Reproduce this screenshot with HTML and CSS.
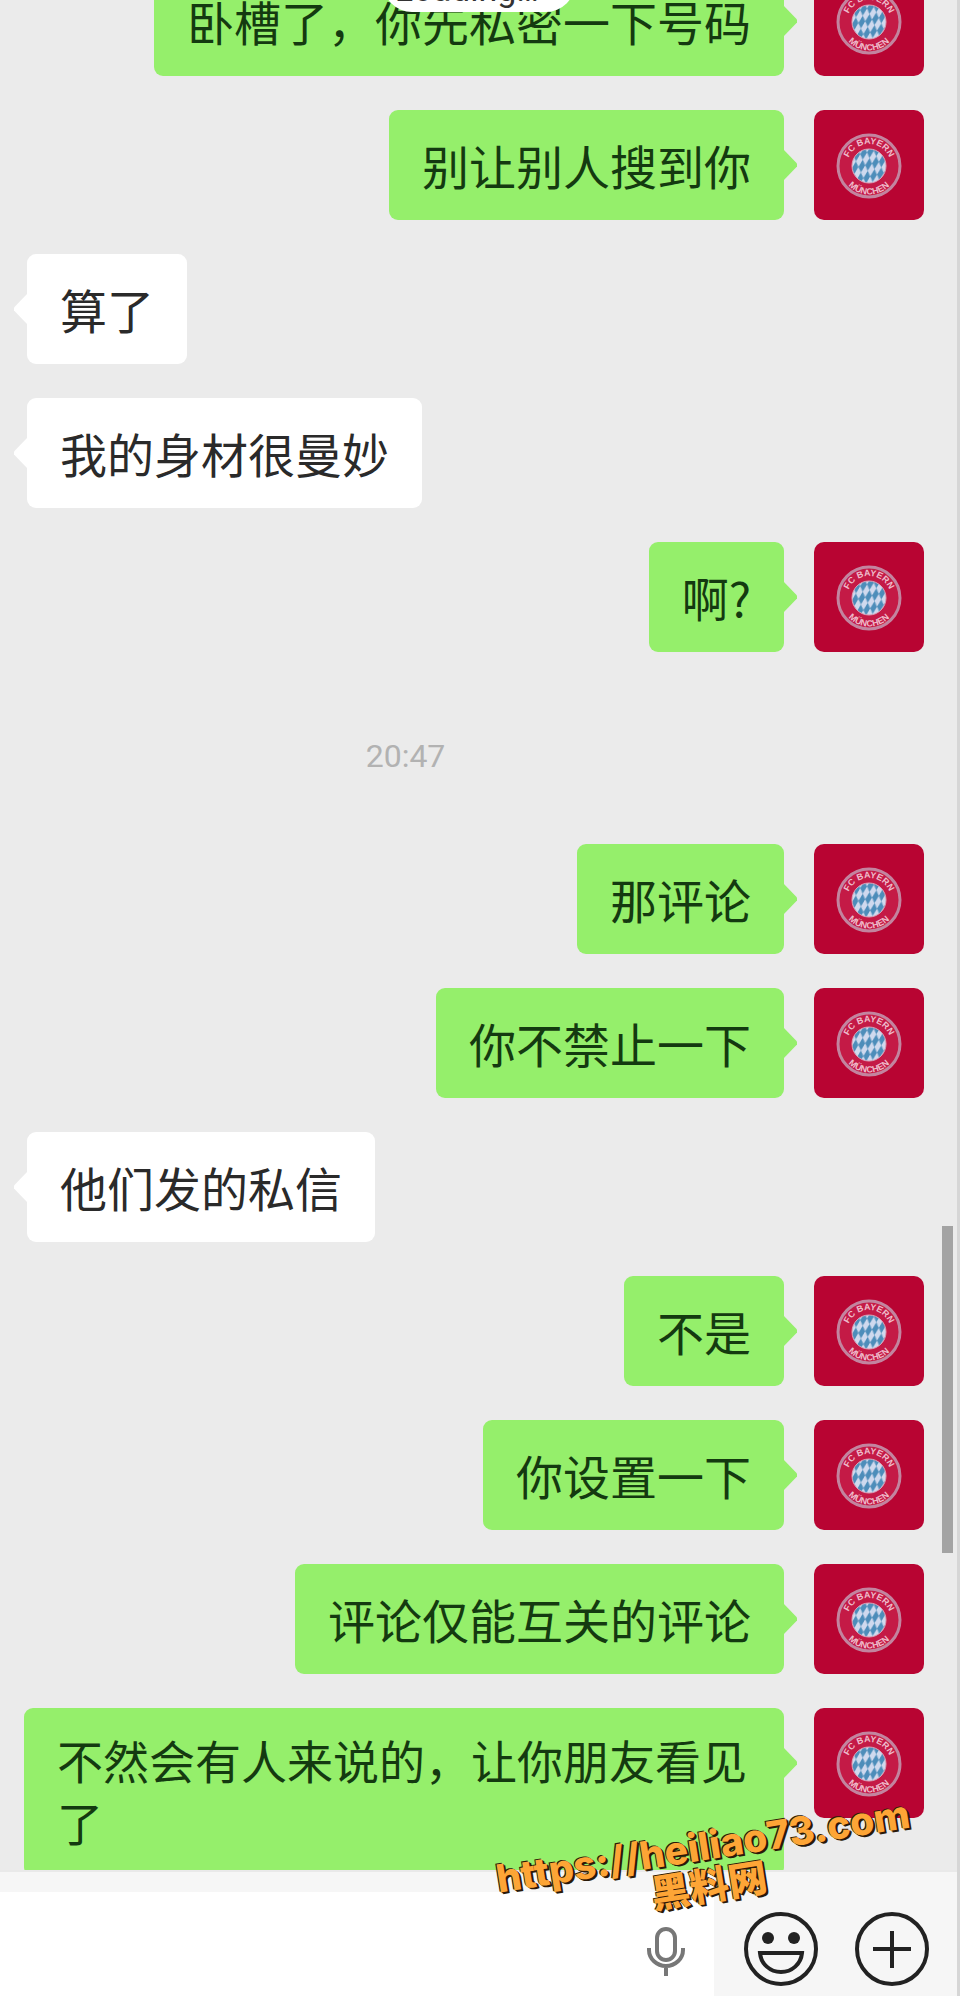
FILE: index.html
```
<!DOCTYPE html>
<html lang="zh-CN">
<head>
<meta charset="utf-8">
<meta name="viewport" content="width=device-width, initial-scale=1">
<title>聊天</title>
<link rel="stylesheet" href="styles.css">
</head>
<body>
<svg class="defs" aria-hidden="true">
  <defs>
    <pattern id="lozenge" width="7" height="12" patternUnits="userSpaceOnUse" patternTransform="rotate(-14) skewX(-22)">
      <rect width="7" height="12" fill="#cfd9ee"/>
      <path d="M3.500 0L7 6L3.500 12L0 6Z" fill="#4d8dba"/>
    </pattern>
    <path id="arc-top" d="M33 56a22 22 0 0 1 44 0"/>
    <path id="arc-bottom" d="M26.500 56a28.500 28.500 0 0 0 57 0"/>
    <symbol id="crest" viewBox="0 0 110 110">
      <rect width="110" height="110" fill="#b80432"/>
      <circle cx="55" cy="56" r="31" fill="#c41a46" stroke="#c3849f" stroke-width="3"/>
      <circle cx="55" cy="56" r="17" fill="url(#lozenge)" stroke="#d9a3b9" stroke-width="1"/>
      <text class="crest-text"><textPath href="#arc-top" startOffset="50%">FC BAYERN</textPath></text>
      <text class="crest-text"><textPath href="#arc-bottom" startOffset="50%">MÜNCHEN</textPath></text>
    </symbol>
  </defs>
</svg>

<main class="chat">
  <div class="toast">Loading…</div>
  <ol class="messages">
    <li class="row row-out"><p class="bubble">卧槽了，你先私密一下号码</p><svg class="avatar" role="img" aria-label="头像"><use href="#crest"/></svg></li>
    <li class="row row-out"><p class="bubble">别让别人搜到你</p><svg class="avatar" role="img" aria-label="头像"><use href="#crest"/></svg></li>
    <li class="row row-in"><p class="bubble">算了</p></li>
    <li class="row row-in"><p class="bubble">我的身材很曼妙</p></li>
    <li class="row row-out"><p class="bubble">啊?</p><svg class="avatar" role="img" aria-label="头像"><use href="#crest"/></svg></li>
    <li class="time"><time>20:47</time></li>
    <li class="row row-out"><p class="bubble">那评论</p><svg class="avatar" role="img" aria-label="头像"><use href="#crest"/></svg></li>
    <li class="row row-out"><p class="bubble">你不禁止一下</p><svg class="avatar" role="img" aria-label="头像"><use href="#crest"/></svg></li>
    <li class="row row-in"><p class="bubble">他们发的私信</p></li>
    <li class="row row-out"><p class="bubble">不是</p><svg class="avatar" role="img" aria-label="头像"><use href="#crest"/></svg></li>
    <li class="row row-out"><p class="bubble">你设置一下</p><svg class="avatar" role="img" aria-label="头像"><use href="#crest"/></svg></li>
    <li class="row row-out"><p class="bubble">评论仅能互关的评论</p><svg class="avatar" role="img" aria-label="头像"><use href="#crest"/></svg></li>
    <li class="row row-out"><p class="bubble bubble-long">不然会有人来说的，让你朋友看见了</p><svg class="avatar" role="img" aria-label="头像"><use href="#crest"/></svg></li>
  </ol>
  <div class="scrollbar"></div>
</main>

<form class="composer">
  <div class="field">
    <input class="field-input" type="text" aria-label="消息">
    <button class="icon-button" type="button" aria-label="语音输入">
      <svg class="icon-mic" viewBox="0 0 40 50" fill="none" stroke="#777" stroke-width="4">
        <rect x="11" y="3" width="18" height="31" rx="9"/>
        <path d="M3 22v2a17 16 0 0 0 34 0v-2M20 40v10"/>
      </svg>
    </button>
  </div>
  <div class="actions">
    <button class="icon-button" type="button" aria-label="表情">
      <svg class="icon-round" viewBox="0 0 74 74" fill="none" stroke="#222" stroke-width="4">
        <circle cx="37" cy="37" r="35"/>
        <circle cx="24" cy="26" r="6" fill="#222" stroke="none"/>
        <circle cx="50" cy="26" r="6" fill="#222" stroke="none"/>
        <path d="M16 41h42c-1 11-10 19-21 19s-20-8-21-19z"/>
      </svg>
    </button>
    <button class="icon-button" type="button" aria-label="更多">
      <svg class="icon-round" viewBox="0 0 74 74" fill="none" stroke="#222" stroke-width="4">
        <circle cx="37" cy="37" r="35"/>
        <path d="M37 19v37M18 37h38"/>
      </svg>
    </button>
  </div>
</form>

<div class="watermark">
  <span>https://heiliao73.com</span>
  <span>黑料网</span>
</div>
</body>
</html>
```
FILE: styles.css
```
* {
  box-sizing: border-box;
}

body {
  position: relative;
  display: flex;
  flex-direction: column;
  height: 100vh;
  margin: 0;
  overflow: hidden;
  border-right: 3px solid #d6d6d6;
  background: #ebebeb;
  color: #2a2a2a;
  font-family: "Noto Sans CJK SC", sans-serif;
}

.defs {
  position: absolute;
  width: 0;
  height: 0;
}

.chat {
  position: relative;
  flex: 1;
  min-height: 0;
  overflow: hidden;
}

.messages {
  display: flex;
  flex-direction: column;
  gap: 34px;
  margin: -34px 0 0;
  padding: 0 33px 0 27px;
  list-style: none;
}

.row {
  display: flex;
  align-items: flex-start;
}

.row-out {
  justify-content: flex-end;
  gap: 30px;
  margin-left: -27px;
}

.bubble {
  position: relative;
  margin: 0;
  padding: 24px 33px;
  border-radius: 9px;
  background: #fff;
  font-size: 47px;
  line-height: 62px;
}

.row-out .bubble {
  background: #95ef6b;
  color: #143a10;
}

.row-out .bubble-long {
  max-width: 760px;
  padding-top: 20px;
  font-size: 46px;
}

.bubble::after {
  content: "";
  position: absolute;
  top: 39px;
  left: -13px;
  width: 14px;
  height: 32px;
  background: inherit;
  clip-path: polygon(100% 0, 0 45%, 0 55%, 100% 100%);
}

.row-out .bubble::after {
  right: -13px;
  left: auto;
  clip-path: polygon(0 0, 100% 45%, 100% 55%, 0 100%);
}

.avatar {
  flex: none;
  width: 110px;
  height: 110px;
  border-radius: 10px;
}

.crest-text {
  fill: #efbccb;
  font: 700 9px "Liberation Sans", sans-serif;
  text-anchor: middle;
}

.time {
  padding: 46px 140px 30px 0;
  color: #b2b2b2;
  font-family: Roboto, sans-serif;
  font-size: 32px;
  line-height: 48px;
  text-align: center;
}

.toast {
  position: absolute;
  z-index: 1;
  top: -46px;
  left: 383px;
  width: 192px;
  padding: 12px 24px 0 0;
  border-radius: 29px;
  background: #fff;
  color: #333;
  font-family: Roboto, sans-serif;
  font-size: 34px;
  line-height: 46px;
  text-align: center;
}

.scrollbar {
  position: absolute;
  top: 1226px;
  right: 4px;
  width: 11px;
  height: 327px;
  background: #a3a3a3;
}

.composer {
  display: flex;
  border-top: 2px solid #e9e9e9;
  background: #f6f6f6;
}

.field {
  display: flex;
  flex: 1;
  align-items: center;
  margin-top: 20px;
  padding-right: 28px;
  background: #fff;
}

.field-input {
  flex: 1;
  min-width: 0;
  height: 104px;
  padding: 0 27px;
  border: 0;
  outline: 0;
  background: transparent;
  font: inherit;
  font-size: 46px;
}

.icon-button {
  display: flex;
  padding: 0;
  border: 0;
  background: none;
}

.icon-mic {
  width: 40px;
  height: 50px;
  margin-top: 14px;
}

.icon-round {
  width: 74px;
  height: 74px;
}

.actions {
  display: flex;
  gap: 37px;
  padding: 40px 28px 0 30px;
}

.watermark {
  position: absolute;
  right: 42px;
  bottom: 90px;
  display: flex;
  flex-direction: column;
  align-items: center;
  color: #fda536;
  font-family: Inter, "Noto Sans CJK SC", sans-serif;
  font-size: 39px;
  font-weight: 800;
  line-height: 40px;
  text-shadow: 1px 1px 0 #2b1a08, 2px 2px 0 #2b1a08, -1px -1px 0 #2b1a08;
  transform: rotate(-9deg);
  white-space: nowrap;
}
```
